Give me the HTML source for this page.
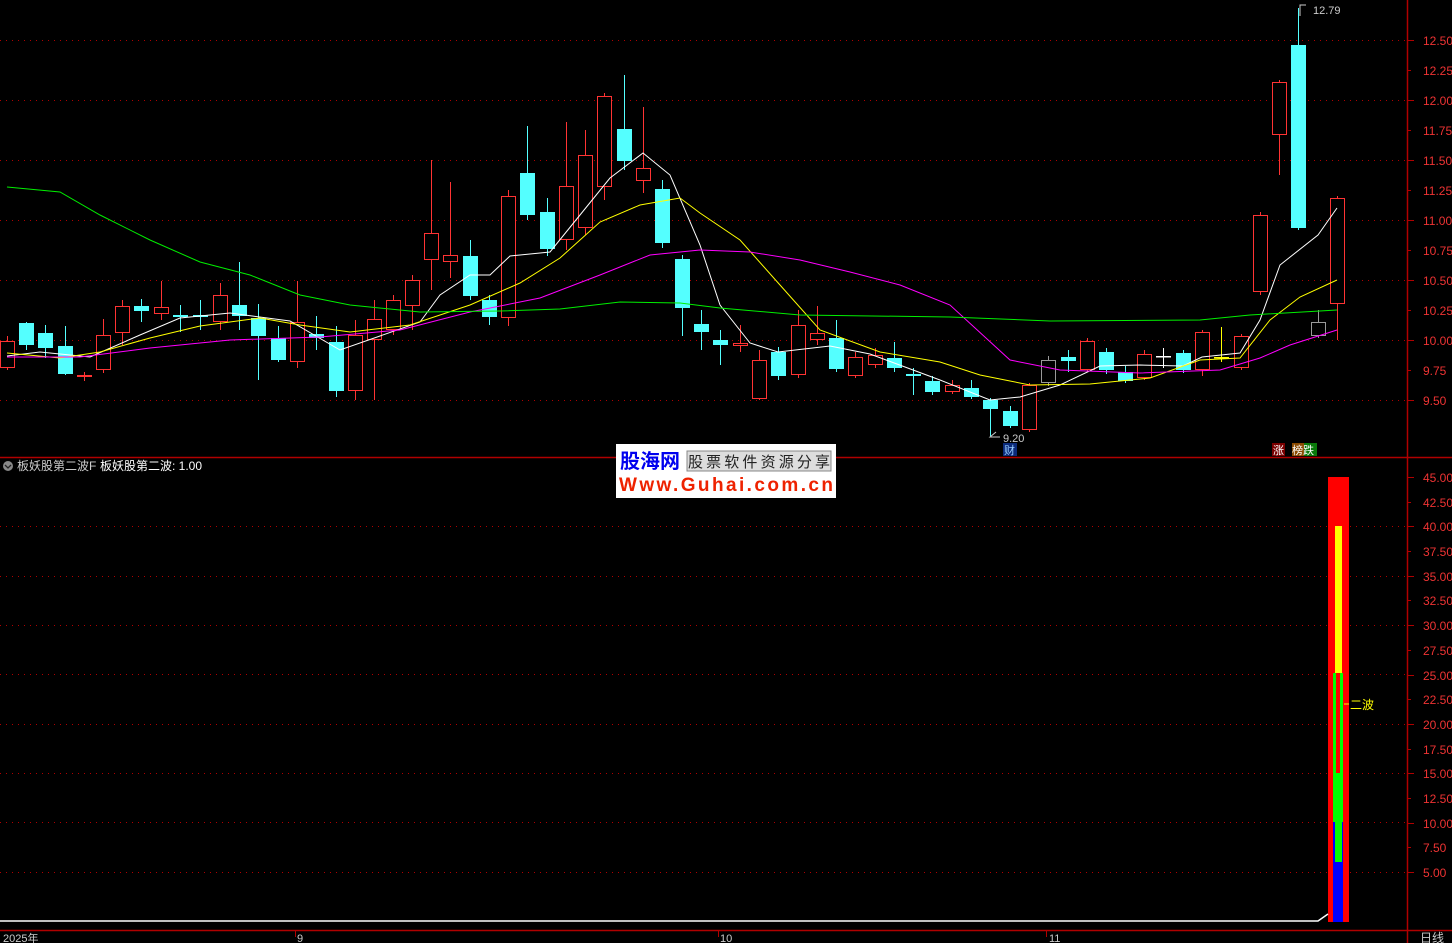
<!DOCTYPE html><html><head><meta charset="utf-8"><style>
html,body{margin:0;padding:0;background:#000;width:1452px;height:943px;overflow:hidden}
svg{display:block}
text{font-family:"Liberation Sans","Noto Sans CJK SC",sans-serif}
</style></head><body>
<svg id="s" width="1452" height="943" xmlns="http://www.w3.org/2000/svg">
<rect width="1452" height="943" fill="#000"/>
<g id="grid"></g>
<line x1="1407.5" y1="0" x2="1407.5" y2="943" stroke="#b00000" stroke-width="1.5"/>
<line x1="0" y1="457.5" x2="1452" y2="457.5" stroke="#b00000" stroke-width="1.5"/>
<line x1="0" y1="930.5" x2="1452" y2="930.5" stroke="#b00000" stroke-width="1.5"/>
<g id="axis"></g>
<g id="candles"></g>
<g id="ma" fill="none" stroke-width="1"></g>
<!-- labels -->
<polyline points="1300,16 1300,5 1306,5" fill="none" stroke="#ccc"/>
<text x="1313" y="14" fill="#ccc" font-size="11">12.79</text>
<polyline points="996,432 990,437 1000,437" fill="none" stroke="#ccc"/>
<text x="1003" y="442" fill="#ccc" font-size="11">9.20</text>
<rect x="1003" y="443" width="14" height="13" fill="#0b2a7a"/><text x="1004" y="454" fill="#9cf" font-size="11">财</text>
<rect x="1272" y="443" width="13" height="13" fill="#7a0000"/><text x="1273" y="454" fill="#fff" font-size="11">涨</text>
<rect x="1292" y="443" width="12" height="13" fill="#8a4a00"/><rect x="1304" y="443" width="13" height="13" fill="#0a7a0a"/>
<text x="1292" y="454" fill="#fff" font-size="11">榜跌</text>
<!-- indicator title -->
<circle cx="8" cy="466" r="5" fill="#888"/><polyline points="5,465 8,468 11,465" fill="none" stroke="#222" stroke-width="1.3"/>
<text x="17" y="470" fill="#ccc" font-size="12">板妖股第二波F</text>
<text x="100" y="470" fill="#fff" font-size="12">板妖股第二波: 1.00</text>
<!-- watermark -->
<rect x="616" y="444" width="220" height="54" fill="#fff"/>
<text x="620" y="468" fill="#0000ee" font-size="20" font-weight="bold" font-family="Noto Sans CJK SC,sans-serif">股海网</text>
<rect x="687" y="451" width="144" height="20" fill="#ddd" stroke="#888"/>
<text x="688" y="467" fill="#222" font-size="15" font-family="Noto Serif CJK SC,serif" textLength="142">股票软件资源分享</text>
<text x="619" y="491" fill="#ee2200" font-size="19" font-weight="bold" textLength="214">Www.Guhai.com.cn</text>
<!-- lower bars -->
<rect x="1328" y="477" width="21" height="445" fill="#f00"/>
<rect x="1335" y="526" width="7" height="148" fill="#ff0"/>
<rect x="1333" y="673" width="10" height="149" fill="#0f0"/>
<rect x="1336" y="673" width="4" height="100" fill="#f00"/>
<rect x="1333" y="822" width="10" height="100" fill="#00f"/>
<rect x="1335" y="822" width="7" height="40" fill="#0f0"/>
<polyline points="0,921 1318,921 1328,914" fill="none" stroke="#fff" stroke-width="1.5"/>
<line x1="1344" y1="704" x2="1349" y2="704" stroke="#ff0"/>
<text x="1350" y="709" fill="#ff0" font-size="12">二波</text>
<!-- dates -->
<text x="3" y="942" fill="#ccc" font-size="11">2025年</text>
<text x="297" y="942" fill="#ccc" font-size="11">9</text>
<text x="720" y="942" fill="#ccc" font-size="11">10</text>
<text x="1049" y="942" fill="#ccc" font-size="11">11</text>
<text x="1420" y="942" fill="#ccc" font-size="12">日线</text>
<line x1="295.5" y1="931" x2="295.5" y2="937" stroke="#b00000"/>
<line x1="718.5" y1="931" x2="718.5" y2="937" stroke="#b00000"/>
<line x1="1046.5" y1="931" x2="1046.5" y2="937" stroke="#b00000"/>
</svg>
<script>
var NS="http://www.w3.org/2000/svg";
function el(p,t,a){var e=document.createElementNS(NS,t);for(var k in a)e.setAttribute(k,a[k]);document.getElementById(p).appendChild(e);return e;}
// grid upper
[40,100,160,220,280,340,400].forEach(function(y){el("grid","line",{x1:0,y1:y+.5,x2:1405,y2:y+.5,stroke:"#b00000","stroke-dasharray":"1,5"});});
[526,576,625,674,724,773,822,872].forEach(function(y){el("grid","line",{x1:0,y1:y+.5,x2:1405,y2:y+.5,stroke:"#b00000","stroke-dasharray":"1,5"});});
// axis upper
for(var i=0;i<13;i++){var p=12.5-i*0.25,y=Math.round(40+i*30);var maj=i%2==0;
el("axis","line",{x1:1408,y1:y+.5,x2:maj?1414:1411,y2:y+.5,stroke:"#b00000"});
var t=el("axis","text",{x:1423,y:y+5,fill:"#e33",'font-size':12});t.textContent=p.toFixed(2);}
for(var i=0;i<17;i++){var p=45-i*2.5,y=Math.round(477+i*24.69);var maj=i%2==0;
el("axis","line",{x1:1408,y1:y+.5,x2:maj?1414:1411,y2:y+.5,stroke:"#b00000"});
var t=el("axis","text",{x:1423,y:y+5,fill:"#e33",'font-size':12});t.textContent=p.toFixed(2);}
// candles: x, top, bottom, hi, lo, type(u up,d down)
var C=[[7,341,368,336,370,'u'],[26,323,345,322,350,'d'],[45,333,348,325,358,'d'],[65,346,374,326,375,'d'],[84,375,377,372,381,'u'],[103,335,370,319,373,'u'],[122,306,333,300,345,'u'],[141,306,311,299,322,'d'],[161,307,314,281,320,'u'],[180,315,317,305,332,'d'],[200,315,317,300,330,'d'],[220,295,322,283,330,'u'],[239,305,316,262,330,'d'],[258,318,336,304,380,'d'],[278,338,360,326,362,'d'],[297,322,362,281,368,'u'],[316,334,338,316,350,'d'],[336,342,391,326,397,'d'],[355,335,391,320,400,'u'],[374,319,340,300,400,'u'],[393,300,330,295,335,'u'],[412,280,306,275,330,'u'],[431,233,260,160,290,'u'],[450,255,262,182,278,'u'],[470,256,296,240,300,'d'],[489,300,317,295,325,'d'],[508,196,318,190,326,'u'],[527,173,215,126,220,'d'],[547,212,249,198,256,'d'],[566,186,240,122,250,'u'],[585,155,228,130,235,'u'],[604,96,187,93,200,'u'],[624,129,161,75,170,'d'],[643,168,181,107,193,'u'],[662,189,243,180,248,'d'],[682,259,308,255,336,'d'],[701,324,332,310,350,'d'],[720,340,345,330,365,'d'],[740,343,346,325,352,'u'],[759,360,399,350,400,'u'],[778,352,376,347,380,'d'],[798,325,375,310,378,'u'],[817,333,340,306,345,'u'],[836,338,369,320,372,'d'],[855,357,376,352,378,'u'],[875,355,365,348,368,'u'],[894,358,368,342,372,'d'],[913,374,376,368,395,'d'],[932,381,392,376,395,'d'],[952,385,392,380,394,'u'],[971,388,397,380,399,'d'],[990,400,409,398,436,'d'],[1010,411,426,406,428,'d'],[1029,385,430,383,432,'u'],[1048,360,383,356,386,'g'],[1068,357,361,350,372,'d'],[1087,341,370,338,372,'u'],[1106,352,370,348,374,'d'],[1125,372,381,366,383,'d'],[1144,354,378,350,380,'u'],[1163,356,357,348,368,'w'],[1183,353,370,350,373,'d'],[1202,332,370,330,376,'u'],[1221,357,359,327,362,'y'],[1241,336,368,334,370,'u'],[1260,215,292,212,295,'u'],[1279,82,135,80,175,'u'],[1298,45,228,8,230,'d'],[1318,322,336,310,338,'g'],[1337,198,304,196,340,'u']];
C.forEach(function(c){var x=c[0],col=c[5]=='d'?'#54ffff':c[5]=='u'?'#ff3333':c[5]=='g'?'#999':c[5]=='y'?'#ff0':'#fff';
el("candles","line",{x1:x+.5,y1:c[3],x2:x+.5,y2:c[4],stroke:col});
var h=Math.max(1,c[2]-c[1]);
if(c[5]=='d')el("candles","rect",{x:x-7,y:c[1],width:15,height:h,fill:col});
else if(c[5]=='w'||c[5]=='y')el("candles","rect",{x:x-7,y:c[1],width:15,height:1.5,fill:col});
else el("candles","rect",{x:x-6.5,y:c[1]+.5,width:14,height:Math.max(1,h-1),fill:"#000",stroke:col});});
var M={"#fff":[[7,356],[40,352],[90,357],[140,335],[180,318],[230,313],[290,321],[340,350],[380,336],[420,322],[440,295],[470,275],[490,275],[510,256],[550,252],[580,215],[610,178],[643,153],[670,175],[700,245],[720,305],[750,343],[778,352],[830,346],[870,354],[940,380],[990,400],[1020,397],[1060,385],[1100,366],[1140,365],[1183,366],[1202,357],[1240,353],[1260,320],[1280,265],[1318,235],[1337,208]],
"#ff0":[[7,353],[60,358],[100,352],[150,338],[200,326],[260,318],[300,325],[350,332],[410,325],[470,305],[520,283],[560,258],[600,222],[640,205],[680,198],[700,213],[740,240],[780,285],[820,330],[880,352],[940,362],[980,375],[1030,385],[1090,384],[1150,378],[1200,360],[1240,358],[1270,320],[1300,297],[1337,280]],
"#f0f":[[7,357],[80,357],[150,348],[230,340],[320,337],[400,330],[470,312],[540,298],[600,275],[650,255],[700,250],[750,252],[800,260],[850,272],[900,285],[950,305],[1010,360],[1060,370],[1140,373],[1220,370],[1260,358],[1290,345],[1337,330]],
"#0e0":[[7,187],[60,192],[100,215],[150,240],[200,262],[250,275],[300,295],[350,305],[420,312],[500,311],[560,309],[620,302],[680,303],[720,308],[800,315],[950,317],[1050,321],[1200,320],[1250,315],[1337,310]]};
for(var k in M)el("ma","polyline",{points:M[k].map(function(p){return p.join(",")}).join(" "),stroke:k});
</script>
</body></html>
